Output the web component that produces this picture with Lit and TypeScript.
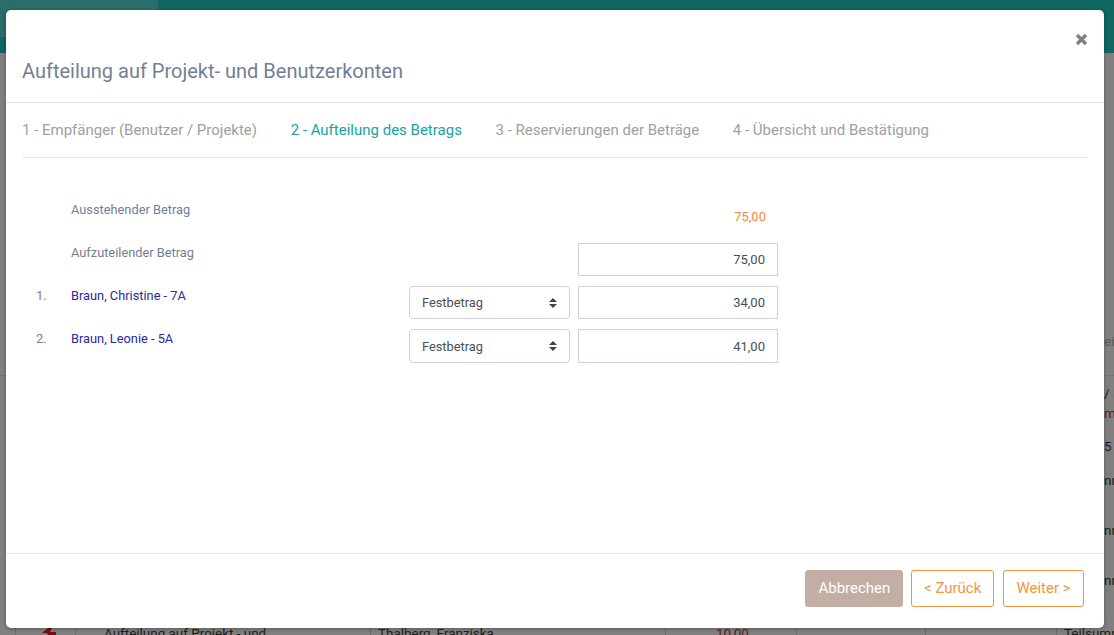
import { LitElement, html, css } from "lit";
import { customElement } from "lit/decorators.js";

@customElement("app-root")
export class AppRoot extends LitElement {
  static styles = css`
    :host { display: block; width: 1114px; height: 635px; position: relative; overflow: hidden; background: #808080; font-family: Roboto, sans-serif; }
    .topbar { height: 53px; background: #0f6663; position: relative; }
    .toptab { position: absolute; left: 0; top: 0; width: 158px; height: 37px; background: #2a6d69; }
    .hline { position: absolute; left: 0; right: 0; top: 375px; height: 1px; background: #737373; }
    .frag { position: absolute; font-size: 13.44px; line-height: 16px; color: #1d1d1d; white-space: nowrap; }
    .vl { position: absolute; top: 628px; height: 7px; width: 1px; background: #6c6c6c; }
    .arrow { position: absolute; left: 41px; top: 628px; }
    .modal { position: absolute; left: 6px; top: 10px; width: 1098px; height: 618px; box-sizing: border-box; background: #fff; border-radius: 5px; display: flex; flex-direction: column; box-shadow: 0 1px 4px rgba(0,0,0,.3); }
    .header { height: 93px; box-sizing: border-box; border-bottom: 1px solid #dee2e6; padding: 49px 16px 0; position: relative; }
    h5 { margin: 0; font-size: 20px; line-height: 24px; font-weight: 400; color: #718096; }
    .close { position: absolute; top: 23px; right: 16px; width: 13px; height: 13px; display: block; }
    .body { flex: 1; padding: 0 16px; }
    .tabs { display: flex; gap: 33.6px; height: 55px; box-sizing: border-box; border-bottom: 1px solid #e2e5e8; padding-top: 17px; font-size: 15px; line-height: 20px; color: #a0a0a0; }
    .tabs .on { color: #17a2a2; }
    .rows { margin-top: 28px; }
    .gridrow { display: grid; grid-template-columns: 35px 338px 169px 200px; height: 43px; padding-left: 14px; font-size: 12.8px; line-height: 16px; color: #718096; }
    .lab, .no { padding-top: 16px; }
    .no { font-size: 13px; }
    .name { color: #2a2a9a; }
    .amount { color: #f6893b; text-align: right; padding: 23px 12px 0 0; font-size: 13px; }
    .input { height: 33px; box-sizing: border-box; border: 1px solid #cdd2dc; background: #fff; display: flex; align-items: center; justify-content: flex-end; padding-right: 12px; color: #495057; font-size: 13px; margin-top: 14px; }
    .select { width: 161px; height: 33px; box-sizing: border-box; border: 1px solid #cdd2dc; border-radius: 4px; background: #fff; display: flex; align-items: center; justify-content: space-between; padding: 0 12px; color: #495057; font-size: 12.8px; margin-top: 14px; }
    .gridrow:last-child .input, .gridrow:last-child .select { height: 34px; }
    .gridrow:last-child .input, .gridrow:last-child .select span { padding-top: 1px; }
    .select svg { display: block; }
    .footer { height: 75px; box-sizing: border-box; border-top: 1px solid #e2e5e8; display: flex; justify-content: flex-end; gap: 8px; padding: 16px 20px 0 0; }
    .btn { height: 37px; box-sizing: border-box; border-radius: 3px; font-size: 15px; line-height: 35px; padding: 0 12px; border: 1px solid #f6933f; color: #f6933f; background: #fff; }
    .btn.back { padding: 0 11.7px; margin-right: 1px; }
    .btn:last-child { padding: 0 12.4px; }
    .btn.gray { background: #c2aea3; border-color: #c2aea3; color: #fff; }
  `;

  private updown() {
    return html`<svg width="8" height="10" viewBox="0 0 8 10"><path d="M4 0 8 4H0zM0 6h8L4 10z" fill="#3a4450"/></svg>`;
  }

  render() {
    return html`
      <div class="topbar"><div class="toptab"></div></div>
      <div class="hline"></div>
      <span class="frag" style="left:1104px;top:334px;color:#5a5a5a">ei</span>
      <span class="frag" style="left:1104px;top:386px">/ I</span>
      <span class="frag" style="left:1104px;top:406px;color:#5c1a1a">m</span>
      <span class="frag" style="left:1104px;top:439px">5</span>
      <span class="frag" style="left:1104px;top:473px">nn</span>
      <span class="frag" style="left:1104px;top:523px">nn</span>
      <span class="frag" style="left:1104px;top:573px">nn</span>
      <span class="frag" style="left:104px;top:626px">Aufteilung auf Projekt - und</span>
      <span class="frag" style="left:378px;top:626px">Thalberg, Franziska</span>
      <span class="frag" style="left:716px;top:626px;color:#5c1a1a">10,00</span>
      <span class="frag" style="left:1064px;top:626px">Teilsumme</span>
      <div class="vl" style="left:15px"></div>
      <div class="vl" style="left:75px"></div>
      <div class="vl" style="left:370px"></div>
      <div class="vl" style="left:665px"></div>
      <div class="vl" style="left:796px"></div>
      <div class="vl" style="left:925px"></div>
      <div class="vl" style="left:1056px"></div>
      <svg class="arrow" width="16" height="7" viewBox="0 0 16 7"><path d="M7 0 1 5h5l1 2h8V4H9l2-4z" fill="#7a0c0c"/></svg>

      <div class="modal">
        <div class="header">
          <h5>Aufteilung auf Projekt- und Benutzerkonten</h5>
          <svg class="close" viewBox="0 0 13 13"><path d="M2 2l9 9M11 2l-9 9" stroke="#808080" stroke-width="3.4" fill="none"/></svg>
        </div>
        <div class="body">
          <div class="tabs">
            <span>1 - Empfänger (Benutzer / Projekte)</span>
            <span class="on">2 - Aufteilung des Betrags</span>
            <span>3 - Reservierungen der Beträge</span>
            <span>4 - Übersicht und Bestätigung</span>
          </div>
          <div class="rows">
            <div class="gridrow">
              <span></span><span class="lab">Ausstehender Betrag</span><span></span>
              <span class="amount">75,00</span>
            </div>
            <div class="gridrow">
              <span></span><span class="lab">Aufzuteilender Betrag</span><span></span>
              <div class="input">75,00</div>
            </div>
            <div class="gridrow">
              <span class="no">1.</span><span class="lab name">Braun, Christine - 7A</span>
              <div class="select"><span>Festbetrag</span>${this.updown()}</div>
              <div class="input">34,00</div>
            </div>
            <div class="gridrow">
              <span class="no">2.</span><span class="lab name">Braun, Leonie - 5A</span>
              <div class="select"><span>Festbetrag</span>${this.updown()}</div>
              <div class="input">41,00</div>
            </div>
          </div>
        </div>
        <div class="footer">
          <span class="btn gray">Abbrechen</span>
          <span class="btn back">&lt; Zurück</span>
          <span class="btn">Weiter &gt;</span>
        </div>
      </div>
    `;
  }
}
